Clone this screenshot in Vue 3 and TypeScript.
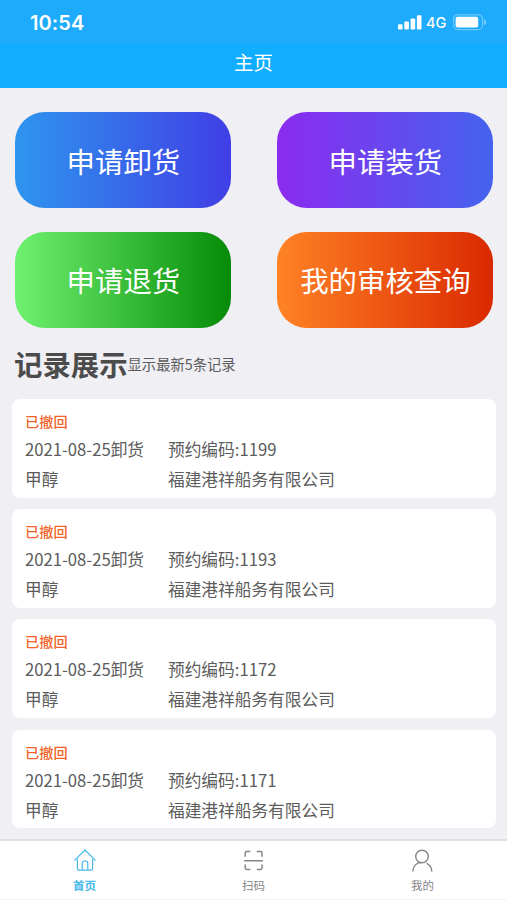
<script setup lang="ts">
interface Action {
  label: string
  kind: string
}

interface ShipmentRecord {
  status: string
  date: string
  type: string
  code: number
  goods: string
  company: string
}

const actions: Action[] = [
  { label: '申请卸货', kind: 'unload' },
  { label: '申请装货', kind: 'load' },
  { label: '申请退货', kind: 'refund' },
  { label: '我的审核查询', kind: 'review' },
]

const records: ShipmentRecord[] = [1199, 1193, 1172, 1171].map((code) => ({
  status: '已撤回',
  date: '2021-08-25',
  type: '卸货',
  code,
  goods: '甲醇',
  company: '福建港祥船务有限公司',
}))
</script>

<template>
  <div class="screen">
    <header class="header">
      <div class="status-bar">
        <span class="time">10:54</span>
        <div class="indicators">
          <svg class="signal" width="24" height="15" viewBox="0 0 24 15" fill="#fff">
            <rect x="0" y="9.2" width="4.6" height="5.3" rx="1.2" />
            <rect x="6.3" y="6.4" width="4.6" height="8.1" rx="1.2" />
            <rect x="12.6" y="3.4" width="4.6" height="11.1" rx="1.2" />
            <rect x="18.9" y="0.2" width="4.6" height="14.3" rx="1.2" />
          </svg>
          <span class="network">4G</span>
          <svg class="battery" width="34" height="17" viewBox="0 0 34 17">
            <rect x="0.6" y="0.8" width="29" height="14.8" rx="4.2" fill="none" stroke="#fff" stroke-opacity=".35" stroke-width="1.2" />
            <rect x="2.6" y="2.8" width="22.6" height="10.8" rx="2" fill="#fff" />
            <path d="M31.2 5.6c2.4.7 2.4 4.6 0 5.3z" fill="#fff" fill-opacity=".5" />
          </svg>
        </div>
      </div>
      <h1 class="title">主页</h1>
    </header>

    <main class="content">
      <div class="actions">
        <button v-for="action in actions" :key="action.kind" class="action" :class="action.kind">
          {{ action.label }}
        </button>
      </div>

      <div class="section-head">
        <h2>记录展示</h2>
        <span>显示最新5条记录</span>
      </div>

      <section class="records">
        <article v-for="record in records" :key="record.code" class="record">
          <div class="state">{{ record.status }}</div>
          <div class="row">
            <span>{{ record.date }}{{ record.type }}</span>
            <span>预约编码:{{ record.code }}</span>
          </div>
          <div class="row last">
            <span>{{ record.goods }}</span>
            <span>{{ record.company }}</span>
          </div>
        </article>
      </section>
    </main>

    <nav class="tabs">
      <a class="tab active">
        <svg width="24" height="24" viewBox="0 0 24 24" fill="none" stroke="currentColor" stroke-width="1.2" stroke-linecap="round" stroke-linejoin="round">
          <path d="M1.8 12.2 12 2l10.2 10.2M4.4 11.4v9.4q0 1.4 1.4 1.4h12.4q1.4 0 1.4-1.4v-9.4M9.2 22v-6.6q0-2.4 2.8-2.4t2.8 2.4V22" />
        </svg>
        <span>首页</span>
      </a>
      <a class="tab">
        <svg width="24" height="24" viewBox="0 0 24 24" fill="none" stroke="currentColor" stroke-width="1.5">
          <path d="M3.2 8.8V5q0-1.4 1.4-1.4h3.8M14.8 3.6h3.8Q20 3.6 20 5v3.8M3.2 16.6V20q0 1.4 1.4 1.4h3.8M14.8 21.4h3.8q1.4 0 1.4-1.4v-3.4M2.2 12.7H21" />
        </svg>
        <span>扫码</span>
      </a>
      <a class="tab">
        <svg width="24" height="24" viewBox="0 0 24 24" fill="none" stroke="currentColor" stroke-width="1.4" stroke-linecap="round">
          <circle cx="11" cy="8.5" r="6.3" />
          <path d="M1.8 23c.4-5 3.8-8.5 8.2-8.5M16.2 15.6c2.6 1.4 4.3 4.1 4.6 7.4" />
        </svg>
        <span>我的</span>
      </a>
    </nav>
  </div>
</template>

<style>
body {
  margin: 0;
}
</style>

<style scoped>
.screen {
  display: flex;
  flex-direction: column;
  width: 507px;
  height: 900px;
  overflow: hidden;
  box-sizing: border-box;
  background: #efeff4;
  color: #5c5c5c;
  font-family: "Noto Sans CJK SC", sans-serif;
}

.header {
  flex: none;
  height: 88px;
  background: linear-gradient(#1eabfc 0, #1eabfc 42px, #11adff 46px);
  color: #fff;
}

.status-bar {
  display: flex;
  justify-content: space-between;
  height: 44px;
  padding: 0 20px 0 30px;
  align-items: center;
}

.time {
  padding-top: 2px;
  font: 600 20px/42px Inter, sans-serif;
  letter-spacing: 0.1px;
}

.indicators {
  display: flex;
  align-items: center;
}

.network {
  width: 27px;
  margin-left: 4px;
  padding-top: 2px;
  font: 500 14.5px/42px Inter, sans-serif;
}

.title {
  margin: 0;
  font-size: 19.5px;
  font-weight: 400;
  line-height: 36px;
  text-align: center;
}

.content {
  flex: 1;
  min-height: 0;
  overflow: hidden;
  padding: 24px 11px 0 12px;
}

.actions {
  display: grid;
  grid-template-columns: 216px 216px;
  grid-auto-rows: 96px;
  column-gap: 46px;
  row-gap: 23.5px;
  padding-left: 3.4px;
}

.action {
  border: 0;
  padding: 0;
  border-radius: 30px;
  color: #fff;
  font: inherit;
  font-size: 28.4px;
}

.unload {
  background: linear-gradient(90deg, #2e95ee, #403ee5);
}

.load {
  background: linear-gradient(90deg, #8c2bef, #4463ee);
}

.refund {
  background: linear-gradient(90deg, #6ff26f, #058b07);
}

.review {
  background: linear-gradient(90deg, #ff8225, #da2900);
}

.section-head {
  display: flex;
  align-items: center;
  height: 71.5px;
  padding-left: 2px;
}

.section-head h2 {
  margin: 0;
  padding-top: 2px;
  color: #4b4b4b;
  font-size: 28.4px;
  line-height: 40px;
}

.section-head span {
  font-size: 14.3px;
}

.records {
  display: flex;
  flex-direction: column;
  gap: 11.7px;
}

.record {
  flex: none;
  box-sizing: border-box;
  height: 98.5px;
  padding: 8px 13px 0;
  border-radius: 8px;
  background: #fff;
}

.state {
  color: #f1652b;
  font-size: 14.2px;
  font-weight: 500;
  line-height: 28px;
}

.row {
  display: grid;
  grid-template-columns: 143px 1fr;
  font-size: 16.7px;
  line-height: 29px;
}

.last {
  line-height: 31px;
}

.tabs {
  flex: none;
  display: flex;
  box-sizing: border-box;
  height: 61px;
  border-top: 2px solid #dedee3;
  border-bottom: 1px solid #f4f4f4;
  background: #fff;
}

.tab {
  flex: 1;
  display: flex;
  flex-direction: column;
  align-items: center;
  padding-top: 7px;
  color: #858585;
}

.tab span {
  font-size: 11.5px;
  line-height: 16px;
  margin-top: 5px;
}

.active {
  color: #45b9e8;
}

.active span {
  font-weight: 700;
}
</style>
